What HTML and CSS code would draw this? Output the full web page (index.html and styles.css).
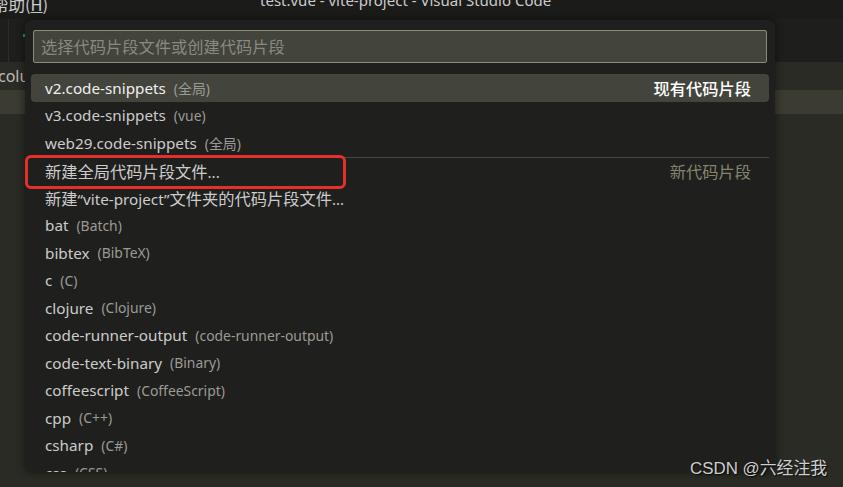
FILE: index.html
```html
<!DOCTYPE html>
<html lang="zh-CN">
<head>
<meta charset="utf-8">
<title>Snippets</title>
<link rel="stylesheet" href="styles.css">
</head>
<body>
<div class="window">
  <div class="titlebar">
    <span class="menu">帮助(<u>H</u>)</span>
    <span class="title">test.vue - vite-project - Visual Studio Code</span>
  </div>
  <div class="tabs">
    <div class="tab-stub"><span class="dot"></span></div>
  </div>
  <div class="crumbs"><span class="crumb-text">colu</span></div>
  <div class="linehl"></div>
  <div class="editor"></div>

  <div class="quickpick">
    <div class="input">选择代码片段文件或创建代码片段</div>
    <div class="list">
      <div class="row selected"><span class="label">v2.code-snippets</span><span class="desc">(全局)</span><span class="group bright">现有代码片段</span></div>
      <div class="row"><span class="label">v3.code-snippets</span><span class="desc">(vue)</span></div>
      <div class="row"><span class="label">web29.code-snippets</span><span class="desc">(全局)</span></div>
      <div class="row sep"><span class="label"><span class="cjk">新建全局代码片段文件</span>...</span><span class="group">新代码片段</span></div>
      <div class="row"><span class="label"><span class="cjk">新建</span>“vite-project”<span class="cjk">文件夹的代码片段文件</span>...</span></div>
      <div class="row"><span class="label">bat</span><span class="desc">(Batch)</span></div>
      <div class="row"><span class="label">bibtex</span><span class="desc">(BibTeX)</span></div>
      <div class="row"><span class="label">c</span><span class="desc">(C)</span></div>
      <div class="row"><span class="label">clojure</span><span class="desc">(Clojure)</span></div>
      <div class="row"><span class="label">code-runner-output</span><span class="desc">(code-runner-output)</span></div>
      <div class="row"><span class="label">code-text-binary</span><span class="desc">(Binary)</span></div>
      <div class="row"><span class="label">coffeescript</span><span class="desc">(CoffeeScript)</span></div>
      <div class="row"><span class="label">cpp</span><span class="desc">(C++)</span></div>
      <div class="row"><span class="label">csharp</span><span class="desc">(C#)</span></div>
      <div class="row"><span class="label">css</span><span class="desc">(CSS)</span></div>
    </div>
  </div>
  <div class="redbox"></div>
  <div class="watermark">CSDN @六经注我</div>
</div>
</body>
</html>
```

FILE: styles.css
```css
* { box-sizing: border-box; }
html, body { margin: 0; padding: 0; }
body {
  width: 843px;
  height: 487px;
  overflow: hidden;
  background: #2a2b24;
  font-family: "Noto Sans", "Noto Sans CJK SC", sans-serif;
}
.window {
  position: relative;
  width: 843px;
  height: 487px;
  display: flex;
  flex-direction: column;
}
.titlebar {
  height: 19px;
  background: #1b1b1a;
  position: relative;
  color: #cccccc;
  font-size: 15px;
  line-height: 1;
}
.menu {
  position: absolute;
  left: -8px;
  top: -4px;
  font-size: 16.5px;
  font-family: "Noto Sans CJK SC", sans-serif;
}
.title {
  position: absolute;
  left: 260px;
  top: -7px;
}
.tabs {
  height: 43px;
  background: #1e1e1c;
  display: flex;
}
.tab-stub {
  width: 25px;
  border-left: 1px solid #2c2c28;
  margin-left: 8px;
  position: relative;
}
.dot {
  position: absolute;
  left: 14px;
  top: 15px;
  width: 2px;
  height: 3px;
  background: #2f8f6f;
}
.crumbs {
  height: 28px;
  background: #2a2b25;
  color: #bdbdb5;
  font-size: 16px;
  line-height: 28px;
}
.crumb-text { margin-left: -2px; }
.linehl {
  height: 24px;
  background: #3b3b31;
}
.editor {
  flex: 1;
  background: #2a2b24;
}
.quickpick {
  position: absolute;
  left: 25px;
  top: 20px;
  width: 750px;
  height: 452px;
  background: #1f1f1d;
  border-radius: 7px;
  box-shadow: 0 0 8px rgba(0, 0, 0, 0.55);
  padding: 10px 6px 0 6px;
  overflow: hidden;
}
.input {
  margin: 0 2px;
  height: 33px;
  background: #43443b;
  border: 1px solid #8e8c79;
  border-radius: 2px;
  color: #8a8a80;
  font-family: "Noto Sans CJK SC", sans-serif;
  font-size: 16.25px;
  line-height: 31px;
  padding-left: 7px;
}
.list {
  margin-top: 11px;
}
.row {
  height: 27.5px;
  display: flex;
  align-items: center;
  padding: 0 18px 0 14px;
  font-size: 15.25px;
  color: #cccccc;
  border-radius: 4px;
  white-space: nowrap;
}
.row.selected {
  background: #43443b;
  color: #f0f0f0;
}
.row.sep {
  border-top: 1px solid #45454a;
  border-radius: 0;
}
.cjk {
  font-family: "Noto Sans CJK SC", sans-serif;
  font-size: 16.25px;
}
.desc {
  margin-left: 8px;
  font-size: 13.9px;
  color: #9b9b95;
}
.group {
  margin-left: auto;
  font-family: "Noto Sans CJK SC", sans-serif;
  font-size: 16.25px;
  color: #85856f;
}
.group.bright {
  color: #ffffff;
  font-weight: 500;
}
.redbox {
  position: absolute;
  left: 25px;
  top: 155px;
  width: 321px;
  height: 34px;
  border: 3px solid #e3302a;
  border-radius: 6px;
}
.watermark {
  position: absolute;
  left: 690px;
  top: 454px;
  font-family: "Liberation Sans", "Noto Sans CJK SC", sans-serif;
  font-size: 16.9px;
  color: #cfcfcf;
  text-shadow: 1px 1px 1px rgba(0, 0, 0, 0.8);
}
```
